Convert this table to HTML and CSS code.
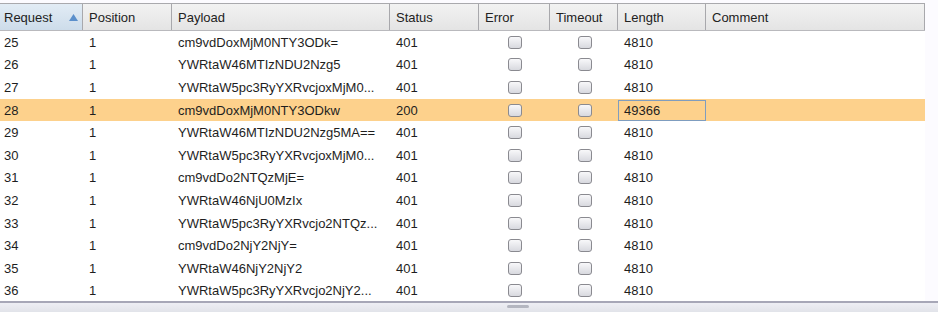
FILE: index.html
```html
<!DOCTYPE html>
<html>
<head>
<meta charset="utf-8">
<link rel="stylesheet" href="styles.css">
</head>
<body>
<div class="frame">
  <div class="table">
    <div class="row head">
      <div class="cell sorted">Request<svg class="arrow" width="9" height="7" viewBox="0 0 9 7"><path d="M4.5 0 L9 7 L0 7 Z" fill="#5b8fcb"/></svg></div>
      <div class="cell">Position</div>
      <div class="cell">Payload</div>
      <div class="cell">Status</div>
      <div class="cell">Error</div>
      <div class="cell">Timeout</div>
      <div class="cell">Length</div>
      <div class="cell last">Comment</div>
    </div>
    <div class="row"><div class="cell">25</div><div class="cell">1</div><div class="cell">cm9vdDoxMjM0NTY3ODk=</div><div class="cell">401</div><div class="cell c"><span class="cb"></span></div><div class="cell c"><span class="cb"></span></div><div class="cell">4810</div><div class="cell"></div></div>
    <div class="row"><div class="cell">26</div><div class="cell">1</div><div class="cell">YWRtaW46MTIzNDU2Nzg5</div><div class="cell">401</div><div class="cell c"><span class="cb"></span></div><div class="cell c"><span class="cb"></span></div><div class="cell">4810</div><div class="cell"></div></div>
    <div class="row"><div class="cell">27</div><div class="cell">1</div><div class="cell">YWRtaW5pc3RyYXRvcjoxMjM0...</div><div class="cell">401</div><div class="cell c"><span class="cb"></span></div><div class="cell c"><span class="cb"></span></div><div class="cell">4810</div><div class="cell"></div></div>
    <div class="row sel"><div class="cell">28</div><div class="cell">1</div><div class="cell">cm9vdDoxMjM0NTY3ODkw</div><div class="cell">200</div><div class="cell c"><span class="cb"></span></div><div class="cell c"><span class="cb"></span></div><div class="cell focus">49366</div><div class="cell"></div></div>
    <div class="row"><div class="cell">29</div><div class="cell">1</div><div class="cell">YWRtaW46MTIzNDU2Nzg5MA==</div><div class="cell">401</div><div class="cell c"><span class="cb"></span></div><div class="cell c"><span class="cb"></span></div><div class="cell">4810</div><div class="cell"></div></div>
    <div class="row"><div class="cell">30</div><div class="cell">1</div><div class="cell">YWRtaW5pc3RyYXRvcjoxMjM0...</div><div class="cell">401</div><div class="cell c"><span class="cb"></span></div><div class="cell c"><span class="cb"></span></div><div class="cell">4810</div><div class="cell"></div></div>
    <div class="row"><div class="cell">31</div><div class="cell">1</div><div class="cell">cm9vdDo2NTQzMjE=</div><div class="cell">401</div><div class="cell c"><span class="cb"></span></div><div class="cell c"><span class="cb"></span></div><div class="cell">4810</div><div class="cell"></div></div>
    <div class="row"><div class="cell">32</div><div class="cell">1</div><div class="cell">YWRtaW46NjU0MzIx</div><div class="cell">401</div><div class="cell c"><span class="cb"></span></div><div class="cell c"><span class="cb"></span></div><div class="cell">4810</div><div class="cell"></div></div>
    <div class="row"><div class="cell">33</div><div class="cell">1</div><div class="cell">YWRtaW5pc3RyYXRvcjo2NTQz...</div><div class="cell">401</div><div class="cell c"><span class="cb"></span></div><div class="cell c"><span class="cb"></span></div><div class="cell">4810</div><div class="cell"></div></div>
    <div class="row"><div class="cell">34</div><div class="cell">1</div><div class="cell">cm9vdDo2NjY2NjY=</div><div class="cell">401</div><div class="cell c"><span class="cb"></span></div><div class="cell c"><span class="cb"></span></div><div class="cell">4810</div><div class="cell"></div></div>
    <div class="row"><div class="cell">35</div><div class="cell">1</div><div class="cell">YWRtaW46NjY2NjY2</div><div class="cell">401</div><div class="cell c"><span class="cb"></span></div><div class="cell c"><span class="cb"></span></div><div class="cell">4810</div><div class="cell"></div></div>
    <div class="row"><div class="cell">36</div><div class="cell">1</div><div class="cell">YWRtaW5pc3RyYXRvcjo2NjY2...</div><div class="cell">401</div><div class="cell c"><span class="cb"></span></div><div class="cell c"><span class="cb"></span></div><div class="cell">4810</div><div class="cell"></div></div>
  </div>
  <div class="hscroll"><span class="thumb"></span></div>
</div>
</body>
</html>
```
FILE: styles.css
```css
html, body {
  margin: 0;
  padding: 0;
  background: #fcfbff;
}
body {
  width: 938px;
  height: 312px;
  overflow: hidden;
  font-family: "Liberation Sans", Arial, sans-serif;
  font-size: 13px;
  color: #1e1e1e;
}
.frame {
  padding-top: 3px;
}
.table {
  width: 925px;
  background: #ffffff;
}
.row {
  display: grid;
  grid-template-columns: 83px 89px 218px 89px 71px 68px 88px 219px;
  height: 22.6px;
  align-items: stretch;
}
.cell {
  display: flex;
  align-items: center;
  padding-left: 6px;
  box-sizing: border-box;
  white-space: nowrap;
  overflow: hidden;
}
.cell.c {
  justify-content: center;
  padding-left: 0;
}
.head {
  height: 28px;
  background: linear-gradient(#f2f2f2, #e4e4e4);
  border-top: 1px solid #a9a9ad;
  border-bottom: 1px solid #b9b9bd;
  box-sizing: border-box;
}
.head .cell {
  border-right: 1px solid #a8a8ac;
  color: #222;
}
.head .cell.sorted {
  background: linear-gradient(#e2ecf5, #cddcea);
  padding-left: 4px;
  justify-content: space-between;
  padding-right: 4px;
}
.head .cell.last {
  border-right: 1px solid #a8a8ac;
}
.arrow {
  display: block;
}
.row:not(.head) .cell:first-child {
  padding-left: 4px;
}
.sel {
  background: #fdd18c;
}
.focus {
  border: 1px solid #7f9dbf;
  padding-left: 5px;
  margin: 1px 0 0 0;
}
.cb {
  width: 14px;
  height: 13px;
  border: 1px solid #8a8a90;
  border-radius: 3px;
  background: linear-gradient(#f8f8fa, #d8d9df);
  box-sizing: border-box;
  margin-left: 1px;
}
.hscroll {
  height: 10px;
  margin-top: -1px;
  border-top: 2px solid #a7a7b7;
  background: linear-gradient(#eeeef4, #e0e2e8);
  position: relative;
}
.thumb {
  position: absolute;
  left: 507px;
  top: 2px;
  width: 22px;
  height: 3px;
  border-radius: 2px;
  background: #b4b6c0;
}
```
